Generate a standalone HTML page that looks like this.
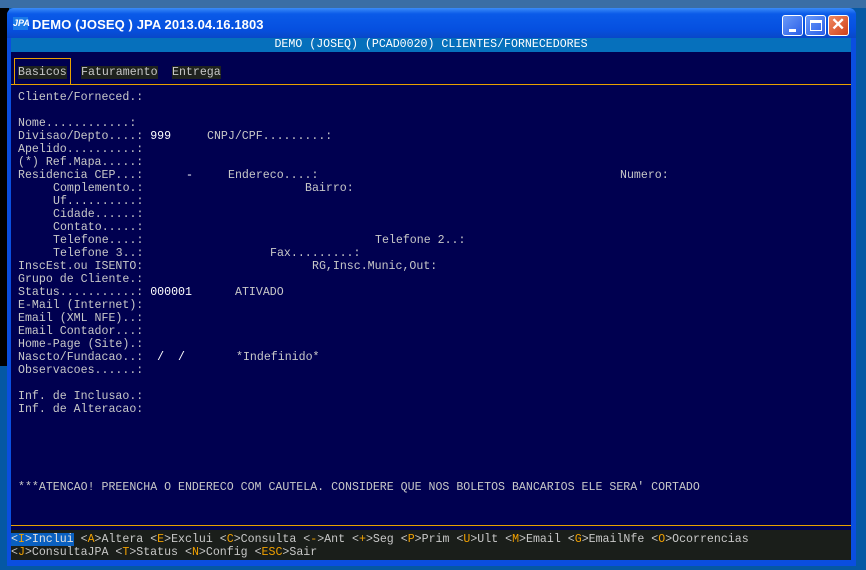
<!DOCTYPE html>
<html><head><meta charset="utf-8"><style>
*{margin:0;padding:0;box-sizing:border-box}
body{width:866px;height:570px;background:#0558a4;position:relative;overflow:hidden;font-family:"Liberation Mono",monospace}
#left{position:absolute;left:0;top:8px;width:9px;height:358px;background:#000}
#top{position:absolute;left:0;top:0;width:866px;height:8px;background:#3a6ea5}
#win{position:absolute;left:7px;top:8px;width:849px;height:558px;background:#0a4ee0;border-radius:7px 7px 0 0}
#title{position:absolute;left:0;top:0;width:849px;height:30px;border-radius:7px 7px 0 0;background:linear-gradient(#3b8cf8,#0a5ae8 20%,#0650e0 70%,#0848c8)}
#title .t{position:absolute;left:25px;top:9px;color:#fff;font:bold 13px "Liberation Sans",sans-serif;letter-spacing:0.1px}
#title .ic{position:absolute;left:6px;top:9px;width:15px;height:13px;background:#1a7ae8;color:#fff;font:bold italic 9px "Liberation Sans",sans-serif;line-height:13px;text-align:center}
.btn{position:absolute;top:7px;width:21px;height:21px;border:1px solid #fff;border-radius:3px;background:linear-gradient(135deg,#6a9af8,#2a5ee8)}
#sub{position:absolute;left:4px;top:30px;width:840px;height:14px;background:#0670bc;color:#fff;font-size:11.6px;line-height:14px;text-align:center}
#main{position:absolute;left:4px;top:44px;width:840px;height:478px;background:#000050}
.l{position:absolute;font-size:11.6px;color:#c8c8c8;white-space:pre;line-height:13px}
.w{color:#fff}
#bot{position:absolute;left:4px;top:522px;width:840px;height:30px;background:#1a1e1a}
.o{color:#f0a000}
</style></head><body>
<div id="top"></div>
<div id="left"></div>
<div id="win">
<div id="title"><div class="ic">JPA</div><div class="t">DEMO (JOSEQ ) JPA 2013.04.16.1803</div>
<div class="btn" style="left:775px"><div style="position:absolute;left:6px;top:13px;width:7px;height:3px;background:#fff"></div></div>
<div class="btn" style="left:798px"><div style="position:absolute;left:4px;top:4px;width:12px;height:11px;border:1px solid #fff;border-top:3px solid #fff"></div></div>
<div class="btn" style="left:821px;background:linear-gradient(135deg,#f08a60,#d0401a)"><div style="position:absolute;left:2px;top:-1px;color:#fff;font:bold 17px 'Liberation Sans',sans-serif">✕</div></div>
</div>
<div id="sub">DEMO (JOSEQ) (PCAD0020) CLIENTES/FORNECEDORES</div>
<div id="main">
<div style="position:absolute;left:3px;top:6px;width:57px;height:27px;border:1px solid #e8a000;border-bottom:0"></div>
<div style="position:absolute;left:0;top:32px;width:840px;height:1px;background:#e8a000"></div>
<div class="l" style="left:7px;top:14px;background:#1e221e;color:#c8c8c8">Basicos</div>
<div class="l" style="left:70px;top:14px;background:#1e221e;color:#c8c8c8">Faturamento</div>
<div class="l" style="left:161px;top:14px;background:#1e221e;color:#c8c8c8">Entrega</div>
</div>
<div id="bot"></div>
</div>
<div class="l" style="left:18px;top:91px">Cliente/Forneced.:</div>
<div class="l" style="left:18px;top:117px">Nome............:</div>
<div class="l" style="left:18px;top:130px">Divisao/Depto....: <span class="w">999</span></div>
<div class="l" style="left:207px;top:130px">CNPJ/CPF.........:</div>
<div class="l" style="left:18px;top:143px">Apelido..........:</div>
<div class="l" style="left:18px;top:156px">(*) Ref.Mapa.....:</div>
<div class="l" style="left:18px;top:169px">Residencia CEP...:</div>
<div class="l w" style="left:186px;top:169px">-</div>
<div class="l" style="left:228px;top:169px">Endereco....:</div>
<div class="l" style="left:620px;top:169px">Numero:</div>
<div class="l" style="left:53px;top:182px">Complemento.:</div>
<div class="l" style="left:305px;top:182px">Bairro:</div>
<div class="l" style="left:53px;top:195px">Uf..........:</div>
<div class="l" style="left:53px;top:208px">Cidade......:</div>
<div class="l" style="left:53px;top:221px">Contato.....:</div>
<div class="l" style="left:53px;top:234px">Telefone....:</div>
<div class="l" style="left:375px;top:234px">Telefone 2..:</div>
<div class="l" style="left:53px;top:247px">Telefone 3..:</div>
<div class="l" style="left:270px;top:247px">Fax.........:</div>
<div class="l" style="left:18px;top:260px">InscEst.ou ISENTO:</div>
<div class="l" style="left:312px;top:260px">RG,Insc.Munic,Out:</div>
<div class="l" style="left:18px;top:273px">Grupo de Cliente.:</div>
<div class="l" style="left:18px;top:286px">Status...........: <span class="w">000001</span></div>
<div class="l" style="left:235px;top:286px">ATIVADO</div>
<div class="l" style="left:18px;top:299px">E-Mail (Internet):</div>
<div class="l" style="left:18px;top:312px">Email (XML NFE)..:</div>
<div class="l" style="left:18px;top:325px">Email Contador...:</div>
<div class="l" style="left:18px;top:338px">Home-Page (Site).:</div>
<div class="l" style="left:18px;top:351px">Nascto/Fundacao..:  <span class="w">/  /</span></div>
<div class="l" style="left:236px;top:351px">*Indefinido*</div>
<div class="l" style="left:18px;top:364px">Observacoes......:</div>
<div class="l" style="left:18px;top:390px">Inf. de Inclusao.:</div>
<div class="l" style="left:18px;top:403px">Inf. de Alteracao:</div>
<div class="l" style="left:18px;top:481px">***ATENCAO! PREENCHA O ENDERECO COM CAUTELA. CONSIDERE QUE NOS BOLETOS BANCARIOS ELE SERA' CORTADO</div>
<div style="position:absolute;left:11px;top:525px;width:840px;height:1px;background:#e8a000"></div>
<div class="l" style="left:11px;top:533px"><span style="background:#0a60c0;color:#e0e0e0">&lt;<span class="o">I</span>&gt;Inclui</span> &lt;<span class="o">A</span>&gt;Altera &lt;<span class="o">E</span>&gt;Exclui &lt;<span class="o">C</span>&gt;Consulta &lt;<span class="o">-</span>&gt;Ant &lt;<span class="o">+</span>&gt;Seg &lt;<span class="o">P</span>&gt;Prim &lt;<span class="o">U</span>&gt;Ult &lt;<span class="o">M</span>&gt;Email &lt;<span class="o">G</span>&gt;EmailNfe &lt;<span class="o">O</span>&gt;Ocorrencias</div>
<div class="l" style="left:11px;top:546px">&lt;<span class="o">J</span>&gt;ConsultaJPA &lt;<span class="o">T</span>&gt;Status &lt;<span class="o">N</span>&gt;Config &lt;<span class="o">ESC</span>&gt;Sair</div>
</body></html>
